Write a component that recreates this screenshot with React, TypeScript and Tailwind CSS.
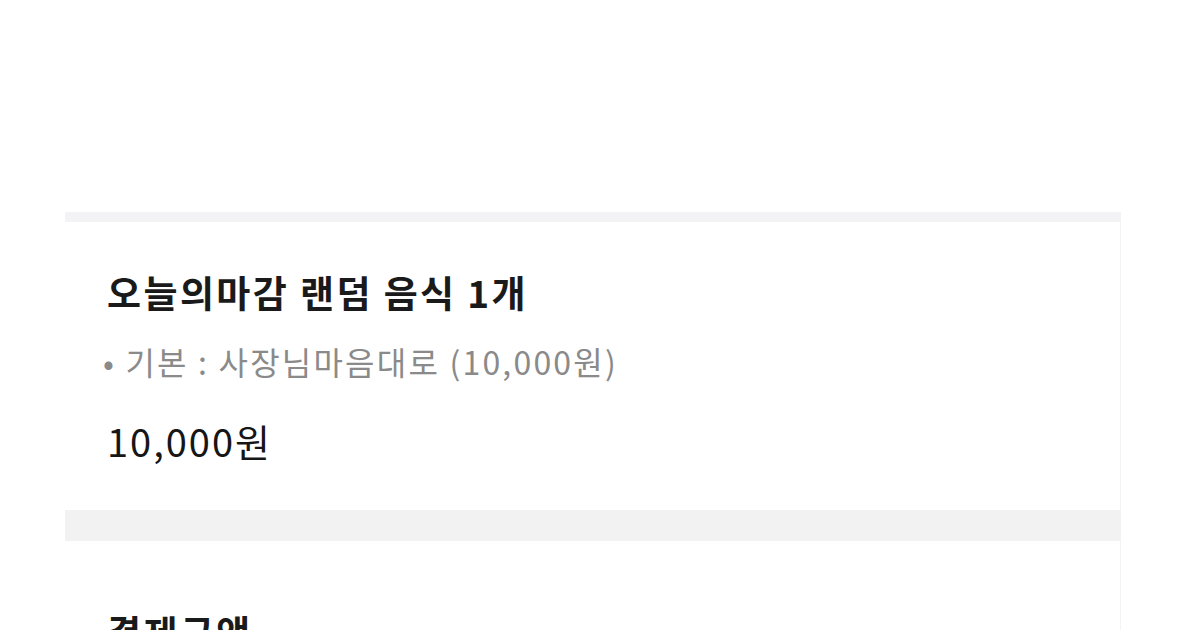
export default function App() {
  return (
    <div
      className="w-[1200px] h-[630px] overflow-hidden bg-white"
      style={{ fontFamily: '"Noto Sans CJK KR", "Noto Sans", sans-serif' }}
    >
      <div className="pt-[212px] pl-[65px] w-[1121px]">
        <div className="h-[10px] bg-[#f3f3f6]" />
        <div className="border-r border-[#f4f4f4] pl-[42px] pt-[46px] pb-[45px]">
          <h1 className="text-[37px] leading-[48px] font-bold text-[#1a1a1a] tracking-[2.4px]">
            오늘의마감 랜덤 음식 1개
          </h1>
          <p className="mt-[23px] text-[32px] leading-[44px] text-[#8a8a8a] -ml-[4px] tracking-[2.2px]">
            • 기본 : 사장님마음대로 (10,000원)
          </p>
          <p className="mt-[34px] text-[38px] leading-[48px] text-[#161616] tracking-[2px]">
            10,000원
          </p>
        </div>
        <div className="h-[31px] bg-[#f2f2f2]" />
        <div className="border-r border-[#f4f4f4] pl-[42px] pt-[67px]">
          <h2 className="text-[37px] leading-[48px] font-bold text-[#1a1a1a] tracking-[2.4px]">결제금액</h2>
        </div>
      </div>
    </div>
  );
}
